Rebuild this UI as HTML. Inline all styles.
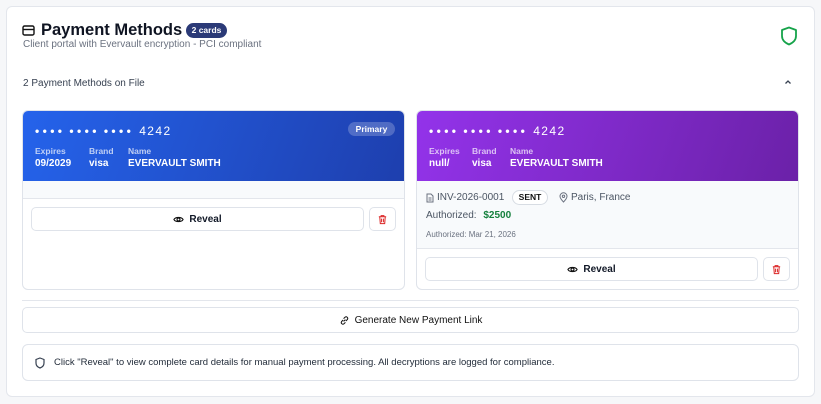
<!DOCTYPE html>
<html><head><style>
*{box-sizing:border-box;margin:0;padding:0}
body{width:821px;height:404px;background:#f6f7f9;font-family:"Liberation Sans",sans-serif;color:#111827;position:relative;overflow:hidden}
.abs{position:absolute}
.outer{left:6px;top:6px;width:809px;height:391px;background:#fff;border:1px solid #e3e6ec;border-radius:6px}
.card{border:1px solid #dfe3ea;border-radius:6px;overflow:hidden;background:#fff}
.hdr{position:absolute;left:0;top:0;right:0;height:70px;color:#fff}
.num{position:absolute;left:12px;top:13px;font-size:12px;white-space:nowrap}
.num .d{font-size:12px;letter-spacing:3.4px;margin-right:4px;font-weight:bold}
.num .n{letter-spacing:1.4px;margin-left:1px}
.lbl{position:absolute;top:35px;font-size:8.5px;font-weight:bold;opacity:.7}
.val{position:absolute;top:47px;font-size:10px;font-weight:bold}
.btn{position:absolute;border:1px solid #dfe3ea;border-radius:5px;background:#fff;font-size:10px;font-weight:bold;display:flex;align-items:center;justify-content:center;gap:5px}
</style></head><body>
<div class="abs outer"></div>
<svg class="abs" style="left:22px;top:25px" width="13" height="11" viewBox="0 0 13 11"><rect x="1" y="1" width="11" height="9" rx="1.5" fill="none" stroke="#111" stroke-width="1.4"/><line x1="1" y1="4.5" x2="12" y2="4.5" stroke="#111" stroke-width="1.4"/></svg>
<div class="abs" style="left:41px;top:21px;font-size:16.5px;font-weight:bold;color:#0f1422">Payment Methods</div>
<div class="abs" style="left:186px;top:23px;width:41px;height:15px;background:#2b3a77;color:#fff;border-radius:8px;font-size:8.5px;font-weight:bold;text-align:center;line-height:15px">2 cards</div>
<div class="abs" style="left:23px;top:39px;font-size:10px;color:#6b7280">Client portal with Evervault encryption - PCI compliant</div>
<svg class="abs" style="left:780px;top:26px" width="18" height="20" viewBox="0 0 18 20"><path d="M9 1.5 L16 4 V10 C16 14.5 12.5 17 9 18.5 C5.5 17 2 14.5 2 10 V4 Z" fill="none" stroke="#16a34a" stroke-width="1.8" stroke-linejoin="round"/></svg>
<div class="abs" style="left:23px;top:78px;font-size:10px;color:#374151">2 Payment Methods on File</div>
<svg class="abs" style="left:784px;top:79px" width="8" height="6" viewBox="0 0 8 6"><path d="M1.5 4.5 L4 2 L6.5 4.5" fill="none" stroke="#374151" stroke-width="1.3"/></svg>

<svg width="0" height="0" style="position:absolute"><defs>
<symbol id="eye" viewBox="0 0 12 12"><path d="M1 6 C2.5 3 9.5 3 11 6 C9.5 9 2.5 9 1 6 Z" fill="none" stroke="#111" stroke-width="1.2"/><circle cx="6" cy="6" r="1.6" fill="none" stroke="#111" stroke-width="1.2"/></symbol>
<symbol id="trash" viewBox="0 0 12 12"><path d="M2 3 H10 M4.5 3 V1.8 H7.5 V3 M3 3 L3.6 10.5 H8.4 L9 3 M5 5 V9 M7 5 V9" fill="none" stroke="#dc2626" stroke-width="1.1"/></symbol>
</defs></svg>

<div class="abs card" style="left:22px;top:110px;width:383px;height:180px">
 <div class="hdr" style="background:linear-gradient(110deg,#2563eb,#1e3fae)">
  <div class="num"><span class="d">••••</span><span class="d">••••</span><span class="d">••••</span><span class="n">4242</span></div>
  <div class="abs" style="right:9px;top:11px;width:47px;height:14px;border-radius:7px;background:rgba(255,255,255,.22);font-size:8.5px;font-weight:bold;text-align:center;line-height:14px">Primary</div>
  <div class="lbl" style="left:12px">Expires</div><div class="lbl" style="left:66px">Brand</div><div class="lbl" style="left:105px">Name</div>
  <div class="val" style="left:12px">09/2029</div><div class="val" style="left:66px">visa</div><div class="val" style="left:105px">EVERVAULT SMITH</div>
 </div>
 <div class="abs" style="left:0;right:0;top:70px;height:18px;background:#f8fafc;border-bottom:1px solid #e3e6ec"></div>
 <div class="btn" style="left:8px;top:96px;width:333px;height:24px"><svg width="11" height="11"><use href="#eye"/></svg>Reveal</div>
 <div class="btn" style="left:346px;top:96px;width:27px;height:24px"><svg width="11" height="11"><use href="#trash"/></svg></div>
</div>

<div class="abs card" style="left:416px;top:110px;width:383px;height:180px">
 <div class="hdr" style="background:linear-gradient(110deg,#9333ea,#6b21a8)">
  <div class="num"><span class="d">••••</span><span class="d">••••</span><span class="d">••••</span><span class="n">4242</span></div>
  <div class="lbl" style="left:12px">Expires</div><div class="lbl" style="left:55px">Brand</div><div class="lbl" style="left:93px">Name</div>
  <div class="val" style="left:12px">null/</div><div class="val" style="left:55px">visa</div><div class="val" style="left:93px">EVERVAULT SMITH</div>
 </div>
 <div class="abs" style="left:0;right:0;top:70px;height:68px;background:#f8fafc;border-bottom:1px solid #e3e6ec;font-size:10px;color:#4b5563">
  <svg class="abs" style="left:9px;top:12px" width="8" height="10" viewBox="0 0 8 10"><path d="M1 1 H5 L7 3 V9 H1 Z M2.5 5 H5.5 M2.5 7 H5.5" fill="none" stroke="#6b7280" stroke-width="1"/></svg>
  <div class="abs" style="left:20px;top:11px">INV-2026-0001</div>
  <div class="abs" style="left:95px;top:9px;width:36px;height:15px;border:1px solid #d7dce3;border-radius:8px;background:#fff;font-size:8.5px;font-weight:bold;color:#111;text-align:center;line-height:13px">SENT</div>
  <svg class="abs" style="left:142px;top:11px" width="9" height="11" viewBox="0 0 9 11"><path d="M4.5 10 C2 7.5 1 6 1 4.3 A3.5 3.5 0 0 1 8 4.3 C8 6 7 7.5 4.5 10 Z" fill="none" stroke="#6b7280" stroke-width="1"/><circle cx="4.5" cy="4.3" r="1.2" fill="none" stroke="#6b7280"/></svg>
  <div class="abs" style="left:154px;top:11px">Paris, France</div>
  <div class="abs" style="left:9px;top:29px">Authorized: <b style="color:#15803d;margin-left:4px">$2500</b></div>
  <div class="abs" style="left:9px;top:49px;font-size:8px;color:#6b7280">Authorized: Mar 21, 2026</div>
 </div>
 <div class="btn" style="left:8px;top:146px;width:333px;height:24px"><svg width="11" height="11"><use href="#eye"/></svg>Reveal</div>
 <div class="btn" style="left:346px;top:146px;width:27px;height:24px"><svg width="11" height="11"><use href="#trash"/></svg></div>
</div>

<div class="abs" style="left:22px;top:300px;width:777px;height:1px;background:#e3e6ec"></div>
<div class="btn" style="left:22px;top:307px;width:777px;height:26px;font-weight:normal;color:#111"><svg width="11" height="11" viewBox="0 0 12 12"><path d="M5 7 L7 5 M4.5 5.5 L2.8 7.2 A1.8 1.8 0 0 0 5.3 9.7 L7 8 M7.5 6.5 L9.2 4.8 A1.8 1.8 0 0 0 6.7 2.3 L5 4" fill="none" stroke="#111" stroke-width="1.1"/></svg>Generate New Payment Link</div>
<div class="abs" style="left:22px;top:344px;width:777px;height:37px;border:1px solid #dfe3ea;border-radius:6px;font-size:9.5px;color:#1f2937">
 <svg class="abs" style="left:12px;top:12px" width="10" height="12" viewBox="0 0 10 12"><path d="M5 1 L9 2.5 V6 C9 8.7 7 10.3 5 11 C3 10.3 1 8.7 1 6 V2.5 Z" fill="none" stroke="#374151" stroke-width="1.2"/></svg>
 <div class="abs" style="left:31px;top:12px">Click "Reveal" to view complete card details for manual payment processing. All decryptions are logged for compliance.</div>
</div>
</body></html>
